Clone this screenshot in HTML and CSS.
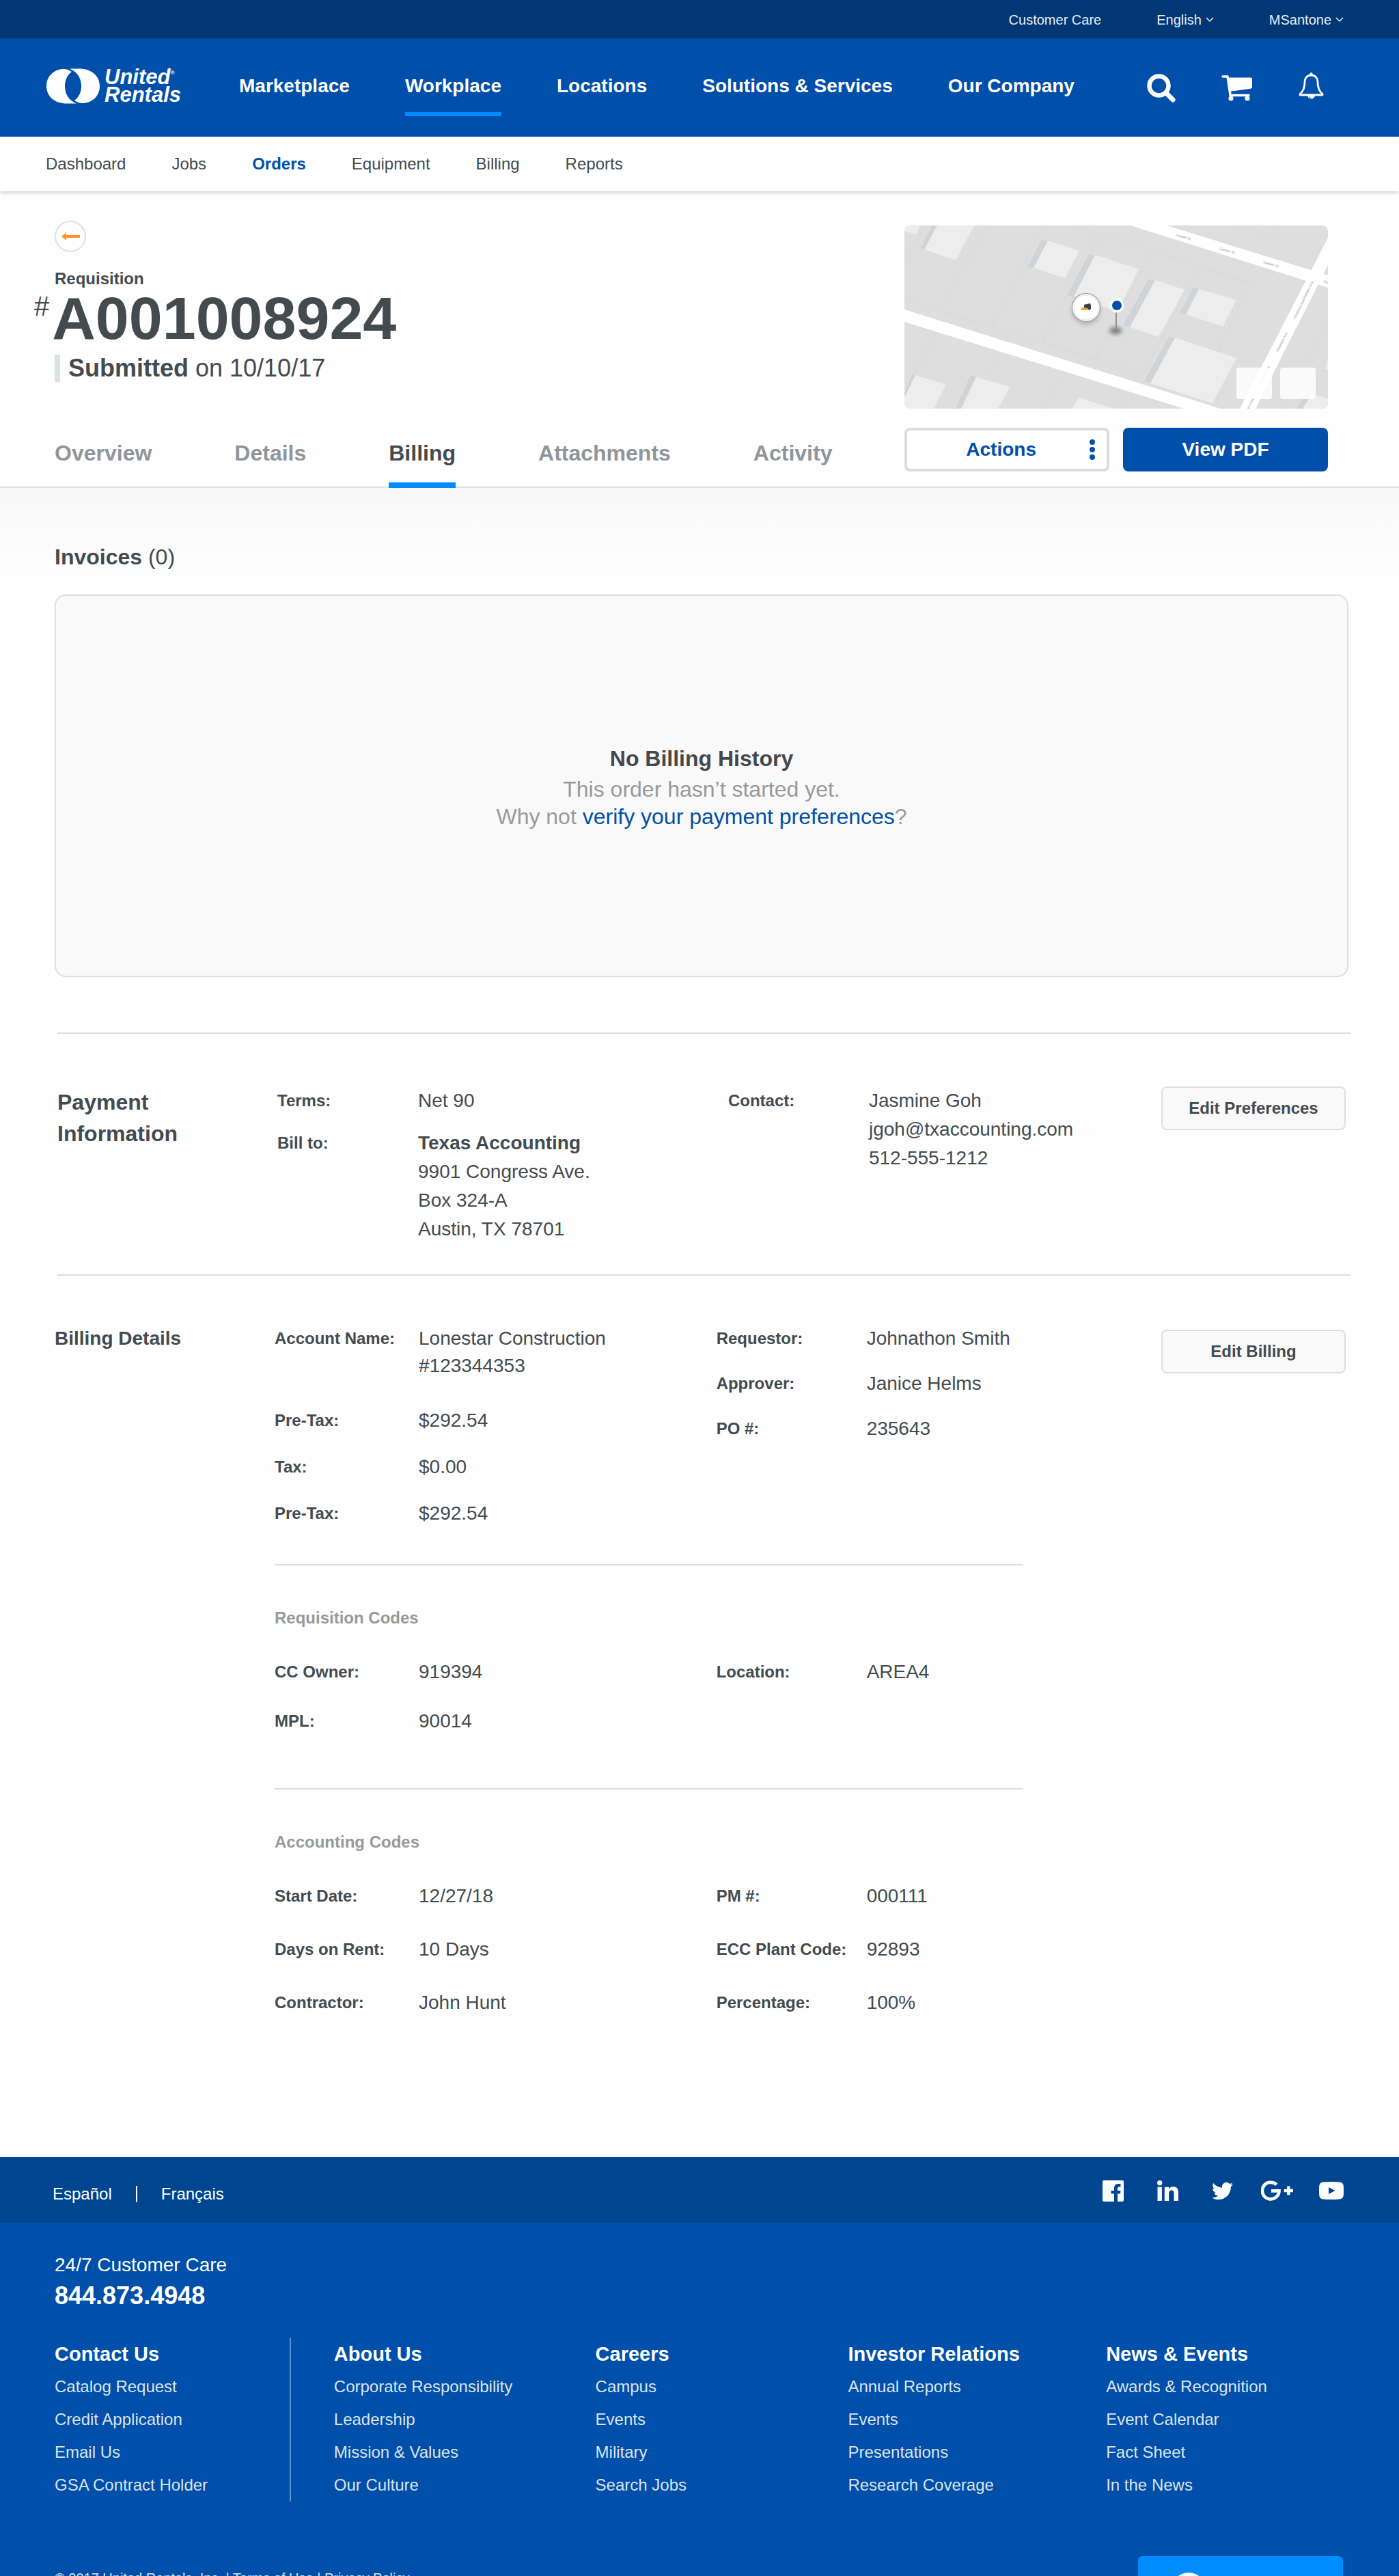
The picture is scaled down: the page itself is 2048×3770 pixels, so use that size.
FILE: index.html
```html
<!DOCTYPE html>
<html lang="en">
<head>
  <meta charset="UTF-8" />
  <meta name="viewport" content="width=device-width, initial-scale=1" />
  <title>Requisition A001008924 - Billing</title>
  <link rel="stylesheet" href="styles.css">
</head>
<body>

<!-- Utility bar -->
<div class="topbar">
  <a href="#">Customer Care</a>
  <button type="button">English
    <svg width="12" height="8" viewBox="0 0 12 8"><path d="M1 1l5 5 5-5" fill="none" stroke="currentColor" stroke-width="1.500" /></svg>
  </button>
  <button type="button">MSantone
    <svg width="12" height="8" viewBox="0 0 12 8"><path d="M1 1l5 5 5-5" fill="none" stroke="currentColor" stroke-width="1.500" /></svg>
  </button>
</div>

<!-- Header -->
<header class="header">
  <a href="#" class="logo">
    <svg width="78" height="52" viewBox="0 0 78 52" fill="#fff">
      <path d="M37 5C30 10 27 18 27 26c0 12 6 21 17 25.600H30C12 51.600 0 41 0 26 0 11 12 1 25 1c5 0 9 2 12 4z" />
      <path transform="rotate(180 39 26)" d="M37 5C30 10 27 18 27 26c0 12 6 21 17 25.600H30C12 51.600 0 41 0 26 0 11 12 1 25 1c5 0 9 2 12 4z" />
    </svg>
    <span class="logo-text">United<sup>®</sup><br>Rentals</span>
  </a>
  <nav class="main-nav">
    <a href="#">Marketplace</a>
    <a href="#" class="active">Workplace</a>
    <a href="#">Locations</a>
    <a href="#">Solutions &amp; Services</a>
    <a href="#">Our Company</a>
  </nav>
  <div class="header-icons">
    <button type="button" aria-label="Search">
      <svg width="42" height="42" viewBox="0 0 42 42" fill="none" stroke="#fff">
        <circle cx="17.500" cy="17.500" r="14" stroke-width="6.500" />
        <path d="M29 29l9 9" stroke-width="7" stroke-linecap="round" />
      </svg>
    </button>
    <a href="#" aria-label="Cart">
      <svg width="46" height="38" viewBox="0 0 46 38">
        <path d="M2 2h7l4 27" fill="none" stroke="#fff" stroke-width="3.500" stroke-linecap="round" stroke-linejoin="round" />
        <path d="M9 3.500h34a2 2 0 0 1 2 2v12q0 2-2 2.300L12 24z" fill="#fff" />
        <path d="M13 29.500h27" stroke="#fff" stroke-width="3.500" stroke-linecap="round" />
        <circle cx="14" cy="34" r="3.600" fill="#fff" />
        <circle cx="38" cy="34" r="3.600" fill="#fff" />
      </svg>
    </a>
    <button type="button" aria-label="Notifications">
      <svg width="38" height="46" viewBox="0 0 38 46">
        <path d="M18.500 4C12 4 9 9 9 14c0 10-3 14.500-7 17.500v1.500h33v-1.500C31 28.500 28 24 28 14c0-5-3-10-9.500-10z" fill="none" stroke="#fff" stroke-width="2.800" stroke-linejoin="round" />
        <circle cx="18.500" cy="2.500" r="2.200" fill="#fff" />
        <path d="M13 34a5.700 6.500 0 0 0 11 0z" fill="#fff" />
        <path d="M15.500 35.500q.5 2.500 3 3" fill="none" stroke="#004faa" />
      </svg>
    </button>
  </div>
</header>

<nav class="sub-nav">
  <a href="#">Dashboard</a>
  <a href="#">Jobs</a>
  <a href="#" class="active">Orders</a>
  <a href="#">Equipment</a>
  <a href="#">Billing</a>
  <a href="#">Reports</a>
</nav>

<!-- Order summary -->
<section class="order">
  <div class="order-main">
    <a href="#" class="back" aria-label="Back">
      <svg width="27" height="12" viewBox="0 0 27 12" fill="#ff9425"><path d="M0 6l7-6v4h20v4H7v4z" /></svg>
    </a>
    <p class="order-type">Requisition</p>
    <h1 class="order-number"><span>#</span>A001008924</h1>
    <p class="order-status"><strong>Submitted</strong> on 10/10/17</p>
    <nav class="tabs">
      <a href="#">Overview</a>
      <a href="#">Details</a>
      <a href="#" class="active">Billing</a>
      <a href="#">Attachments</a>
      <a href="#">Activity</a>
    </nav>
  </div>

  <div class="order-side">
    <svg class="map" viewBox="0 0 620 268">
      <defs>
        <filter id="soft" x="-50%" y="-50%" width="200%" height="200%"><feGaussianBlur stdDeviation="3" /></filter>
      </defs>
      <rect width="620" height="268" fill="#dedede" />
      <!-- parcels -->
      <path d="M29 0L0 58M119 0L53 125M204 0l-76 150M286 15l-85 158M361 39l-83 158M432 60l-82 157M246 0l261 85-49 98M0 109l350 108M47 157l-33 61M141 185l-20 40M232 213l-28 55M324 243l-13 25M620 137l-64 131M489 0l52 16 9-16" fill="none" stroke="#d7d8d8" />
      <!-- streets -->
      <path d="M0 123l462 145h-53L0 141zM331 0h53l236 73v18zM620 18v40L514 268h-23z" fill="#fff" />
      <!-- building shadows -->
      <path d="M40 0h10L31 36l-7-2zM201 21l10 2-20 40-11-3zM270 42l10 2-30 61-12-3zM357 79l11 2-36 69-12-4zM422 91l10 3-18 37-11-3zM387 163l10 2-35 67-11-4zM12 217l5 3-15 34-2-9zM97 219l9 4-22 45h-9zM588 245l9 3-13 20h-10z" fill="#d0d4d7" />
      <!-- buildings -->
      <path d="M0 0h23l-6 13L0 8zM48 0h54L75 51 29 35zM210 22l46 15-21 40-46-15zM279 43l64 21-31 62-64-22zM367 80l43 14-38 69-42-14zM431 93l55 16-20 39-54-18zM396 164l90 30-35 66-91-29zM16 219l45 14-18 35H0v-16zM105 222l49 14-17 32H83zM255 252l51 16h-60zM596 247l24 6v15h-37zM620 195l-4 15 4 1z" fill="#ededed" />
      <g class="map-street">
        <text transform="translate(397 15) rotate(17)">Garden St</text>
        <text transform="translate(461 35) rotate(17)">Garden St</text>
        <text transform="translate(525 55) rotate(17)">Garden St</text>
        <text transform="translate(613 83) rotate(17)">Garden St</text>
        <text transform="translate(572 137) rotate(-63)">Chalmers Ave</text>
        <text transform="translate(585 110) rotate(-63)">Chalmers Ave</text>
        <text transform="translate(547 185) rotate(-63)">Chalmers Ave</text>
        <text transform="translate(521 234) rotate(-63)">Chalmers Ave</text>
        <text transform="translate(498 281) rotate(-63)">Chalmers Ave</text>
      </g>
      <!-- equipment marker -->
      <circle cx="266" cy="124" r="21" fill="#888" opacity=".5" filter="url(#soft)" />
      <circle cx="266" cy="120" r="20.500" fill="#fff" stroke="#aaa" stroke-width="1.500" />
      <circle cx="266" cy="120" r="18" fill="#fff" stroke="#e4e4e4" />
      <path d="M259 121l6-3 7 1v4l-5 1h-8z" fill="#f5a623" />
      <path d="M263 120v-4l4-1 5-1 1 3v5l-3 2-2-3z" fill="#3a3f4a" />
      <!-- site pin -->
      <ellipse cx="309" cy="154" rx="9" ry="5" fill="#777" filter="url(#soft)" />
      <path d="M310 126v26" stroke="#8a9096" stroke-width="2" />
      <circle cx="311" cy="117" r="10.500" fill="#fff" />
      <circle cx="311" cy="117" r="7" fill="#004faa" />
      <!-- zoom controls -->
      <rect x="486" y="208" width="52" height="46" rx="4" fill="#fff" opacity=".85" />
      <rect x="550" y="208" width="52" height="46" rx="4" fill="#fff" opacity=".85" />
    </svg>
    <div class="order-buttons">
      <button type="button" class="btn btn-outline">Actions
        <svg width="8" height="30" viewBox="0 0 8 30" fill="#004faa"><circle cx="4" cy="4" r="4" /><circle cx="4" cy="15" r="4" /><circle cx="4" cy="26" r="4" /></svg>
      </button>
      <button type="button" class="btn btn-primary">View PDF</button>
    </div>
  </div>
</section>

<main>
  <!-- Invoices -->
  <section class="invoices">
    <h2><strong>Invoices</strong> (0)</h2>
    <div class="empty">
      <h3>No Billing History</h3>
      <p>This order hasn’t started yet.<br>Why not <a href="#">verify your payment preferences</a>?</p>
    </div>
  </section>

  <!-- Payment information -->
  <section class="payment">
    <h2>Payment<br>Information</h2>
    <div class="pairs">
      <dl>
        <dt>Terms:</dt>
        <dd>Net 90</dd>
        <dt>Bill to:</dt>
        <dd><strong>Texas Accounting</strong><br>9901 Congress Ave.<br>Box 324-A<br>Austin, TX 78701</dd>
      </dl>
      <dl>
        <dt>Contact:</dt>
        <dd>Jasmine Goh<br>jgoh@txaccounting.com<br>512-555-1212</dd>
      </dl>
    </div>
    <button type="button" class="btn-edit">Edit Preferences</button>
  </section>

  <!-- Billing details -->
  <section class="billing">
    <h2>Billing Details</h2>
    <div class="billing-body">
      <div class="pairs">
        <dl>
          <dt>Account Name:</dt>
          <dd class="account">Lonestar Construction<br>#123344353</dd>
          <dt>Pre-Tax:</dt>
          <dd>$292.54</dd>
          <dt>Tax:</dt>
          <dd>$0.00</dd>
          <dt>Pre-Tax:</dt>
          <dd>$292.54</dd>
        </dl>
        <dl>
          <dt>Requestor:</dt>
          <dd>Johnathon Smith</dd>
          <dt>Approver:</dt>
          <dd>Janice Helms</dd>
          <dt>PO #:</dt>
          <dd>235643</dd>
        </dl>
      </div>

      <div class="codes">
        <h3>Requisition Codes</h3>
        <div class="pairs">
          <dl>
            <dt>CC Owner:</dt>
            <dd>919394</dd>
            <dt>MPL:</dt>
            <dd>90014</dd>
          </dl>
          <dl>
            <dt>Location:</dt>
            <dd>AREA4</dd>
          </dl>
        </div>
      </div>

      <div class="codes accounting">
        <h3>Accounting Codes</h3>
        <div class="pairs">
          <dl>
            <dt>Start Date:</dt>
            <dd>12/27/18</dd>
            <dt>Days on Rent:</dt>
            <dd>10 Days</dd>
            <dt>Contractor:</dt>
            <dd>John Hunt</dd>
          </dl>
          <dl>
            <dt>PM #:</dt>
            <dd>000111</dd>
            <dt>ECC Plant Code:</dt>
            <dd>92893</dd>
            <dt>Percentage:</dt>
            <dd>100%</dd>
          </dl>
        </div>
      </div>
    </div>
    <button type="button" class="btn-edit">Edit Billing</button>
  </section>
</main>

<!-- Footer -->
<footer class="footer">
  <div class="footer-top">
    <div class="languages">
      <a href="#">Español</a>
      <span class="bar"></span>
      <a href="#">Français</a>
    </div>
    <div class="social">
      <a href="#" aria-label="Facebook">
        <svg width="31" height="31" viewBox="0 0 31 31"><path d="M2 0h27a2 2 0 0 1 2 2v27a2 2 0 0 1-2 2h-7V19.500h4l.5-4.500H22v-3c0-1.700.8-2.500 2.500-2.500h2V5.200C21 4.500 17 6 17 11.500V15h-4.500v4.500H17V31H2a2 2 0 0 1-2-2V2a2 2 0 0 1 2-2z" /></svg>
      </a>
      <a href="#" aria-label="LinkedIn">
        <svg width="31" height="30" viewBox="0 0 31 30"><circle cx="3.700" cy="3.700" r="3.700" /><path d="M.5 9.700h6.400V30H.5zM10.800 9.700H17v2.800c1-1.900 3.300-3.300 6.500-3.300 6.300 0 7.500 4.200 7.500 9.500V30h-6.400V20c0-2.400 0-5.400-3.400-5.400S17.200 17 17.200 20v10h-6.400z" /></svg>
      </a>
      <a href="#" aria-label="Twitter">
        <svg width="31" height="31" viewBox="0 0 24 24"><path d="M23.953 4.570a10 10 0 01-2.825.775 4.958 4.958 0 002.163-2.723c-.951.555-2.005.959-3.127 1.184a4.920 4.920 0 00-8.384 4.482C7.690 8.095 4.067 6.130 1.640 3.162a4.822 4.822 0 00-.666 2.475c0 1.710.87 3.213 2.188 4.096a4.904 4.904 0 01-2.228-.616v.06a4.923 4.923 0 003.946 4.827 4.996 4.996 0 01-2.212.085 4.936 4.936 0 004.604 3.417 9.867 9.867 0 01-6.102 2.105c-.39 0-.779-.023-1.170-.067a13.995 13.995 0 007.557 2.209c9.053 0 13.998-7.496 13.998-13.985 0-.21 0-.42-.015-.63A9.935 9.935 0 0024 4.590z" /></svg>
      </a>
      <a href="#" aria-label="Google Plus">
        <svg width="47" height="30" viewBox="0 0 47 30" fill="none" stroke="#fff">
          <path d="M22.800 6.300A12.300 12.300 0 1 0 26.500 15.300H15" stroke-width="4.700" />
          <path d="M33.700 15h13.300M40.300 8.400v13.200" stroke-width="4.300" />
        </svg>
      </a>
      <a href="#" aria-label="YouTube">
        <svg width="36" height="26" viewBox="0 0 36 26"><path d="M6 .5Q18-.5 30 .5q5.500.5 5.800 6 .4 6.500 0 13-.3 5.500-5.800 6-12 1-24 0-5.500-.5-5.800-6-.4-6.500 0-13Q.5 1 6 .5zM14 8v10l9.500-5z" fill-rule="evenodd" /></svg>
      </a>
    </div>
  </div>

  <div class="footer-body">
    <p class="care">24/7 Customer Care</p>
    <a href="tel:8448734948" class="phone">844.873.4948</a>

    <div class="footer-links">
      <ul class="contact">
        <li><h4>Contact Us</h4></li>
        <li><a href="#">Catalog Request</a></li>
        <li><a href="#">Credit Application</a></li>
        <li><a href="#">Email Us</a></li>
        <li><a href="#">GSA Contract Holder</a></li>
      </ul>
      <ul class="about">
        <li><h4>About Us</h4></li>
        <li><a href="#">Corporate Responsibility</a></li>
        <li><a href="#">Leadership</a></li>
        <li><a href="#">Mission &amp; Values</a></li>
        <li><a href="#">Our Culture</a></li>
      </ul>
      <ul>
        <li><h4>Careers</h4></li>
        <li><a href="#">Campus</a></li>
        <li><a href="#">Events</a></li>
        <li><a href="#">Military</a></li>
        <li><a href="#">Search Jobs</a></li>
      </ul>
      <ul>
        <li><h4>Investor Relations</h4></li>
        <li><a href="#">Annual Reports</a></li>
        <li><a href="#">Events</a></li>
        <li><a href="#">Presentations</a></li>
        <li><a href="#">Research Coverage</a></li>
      </ul>
      <ul>
        <li><h4>News &amp; Events</h4></li>
        <li><a href="#">Awards &amp; Recognition</a></li>
        <li><a href="#">Event Calendar</a></li>
        <li><a href="#">Fact Sheet</a></li>
        <li><a href="#">In the News</a></li>
      </ul>
    </div>

    <div class="footer-bottom">
      <p>© 2017 United Rentals, Inc. | <a href="#">Terms of Use</a> | <a href="#">Privacy Policy</a></p>
      <button type="button" class="help" aria-label="Help">
        <svg width="52" height="52" viewBox="0 0 52 52"><circle cx="26" cy="26" r="26" fill="#fff" /></svg>
      </button>
    </div>
  </div>
</footer>

</body>
</html>
```
FILE: styles.css
```css
* {
  box-sizing: border-box;
}
body {
  margin: 0;
  font-family: "Liberation Sans", Arial, sans-serif;
  font-size: 28px;
  color: #434b4f;
  background: #fefefe;
}
h1, h2, h3, h4, p, ul, dl, dd {
  margin: 0;
  padding: 0;
}
ul {
  list-style: none;
}
a {
  color: inherit;
  text-decoration: none;
}
button {
  font-family: inherit;
  border: none;
  background: none;
  padding: 0;
  cursor: pointer;
}
svg {
  display: block;
}

/* Header */
.topbar {
  display: flex;
  justify-content: flex-end;
  align-items: center;
  gap: 81px;
  height: 56px;
  padding: 2px 81px 0 0;
  background: #003876;
  color: #e8eef5;
  font-size: 20px;
}
.topbar button {
  display: flex;
  align-items: center;
  gap: 6px;
  color: inherit;
  font-size: 20px;
}
.header {
  display: flex;
  align-items: center;
  height: 144px;
  padding: 0 109px 4px 68px;
  background: #004faa;
  color: #fff;
}
.logo {
  display: flex;
  align-items: center;
  gap: 7px;
  width: 282px;
}
.logo-text {
  font-size: 31px;
  line-height: 26px;
  font-weight: bold;
  font-style: italic;
}
.logo-text sup {
  font-size: 8px;
  line-height: 8px;
  vertical-align: 14px;
}
.main-nav {
  display: flex;
  gap: 81px;
  font-weight: bold;
}
.main-nav a {
  line-height: 40px;
  padding: 18px 0;
  border: solid transparent;
  border-width: 6px 0;
}
.main-nav a.active {
  border-bottom-color: #008cff;
}
.header-icons {
  display: flex;
  align-items: center;
  gap: 67px;
  margin-left: auto;
  padding-top: 6px;
}
.sub-nav {
  display: flex;
  align-items: center;
  gap: 67px;
  height: 80px;
  padding-left: 67px;
  background: #fff;
  box-shadow: 0 2px 6px rgba(0, 0, 0, 0.2);
  font-size: 24px;
}
.sub-nav .active {
  color: #004faa;
  font-weight: bold;
}

/* Order summary */
.order {
  display: flex;
  justify-content: space-between;
  padding: 0 104px 0 80px;
  border-bottom: 2px solid #dbe0e4;
}
.back {
  display: flex;
  align-items: center;
  justify-content: center;
  width: 46px;
  height: 46px;
  margin: 43px 0 25px;
  border: 2px solid #dde1e4;
  border-radius: 50%;
}
.order-type {
  font-size: 24px;
  line-height: 28px;
  font-weight: bold;
}
.order-number {
  display: flex;
  gap: 4px;
  margin-left: -30px;
  font-size: 88px;
  line-height: 88px;
}
.order-number span {
  font-size: 40px;
  line-height: 52px;
  font-weight: normal;
}
.order-status {
  margin-top: 9px;
  padding-left: 12px;
  border-left: 8px solid #dbe0e4;
  font-size: 36px;
  line-height: 40px;
}
.tabs {
  display: flex;
  gap: 121px;
  margin: 84px 0 -2px;
  font-size: 32px;
  font-weight: bold;
  color: #8f9699;
}
.tabs a {
  line-height: 40px;
  padding-bottom: 23px;
  border-bottom: 8px solid transparent;
}
.tabs a.active {
  color: #434b4f;
  border-bottom-color: #008cff;
}
.order-side {
  width: 620px;
  padding: 50px 0 22px;
}
.map {
  width: 100%;
  height: auto;
  border-radius: 8px;
}
.map-street {
  font-size: 5px;
  fill: #999;
}
.order-buttons {
  display: grid;
  grid-template-columns: 1fr 1fr;
  gap: 20px;
  margin-top: 28px;
}
.btn {
  height: 64px;
  border-radius: 8px;
  font-size: 28px;
  font-weight: bold;
}
.btn-outline {
  display: flex;
  align-items: center;
  justify-content: flex-end;
  gap: 78px;
  padding-right: 17px;
  border: 4px solid #dcdcdc;
  background: #fff;
  color: #004faa;
}
.btn-primary {
  background: #004faa;
  color: #fff;
}

/* Invoices */
.invoices {
  padding: 81px 74px 81px 80px;
  background: linear-gradient(#f8f8f8, #fefefe 140px);
}
.invoices h2 {
  font-size: 32px;
  line-height: 40px;
  font-weight: normal;
}
.empty {
  display: flex;
  flex-direction: column;
  align-items: center;
  justify-content: center;
  height: 560px;
  margin-top: 35px;
  padding-top: 4px;
  border: 2px solid #dcdfe2;
  border-radius: 16px;
  background: #f9f9f9;
  color: #999;
  font-size: 32px;
  line-height: 40px;
  text-align: center;
}
.empty h3 {
  margin-bottom: 5px;
  color: #45484a;
  font-size: 32px;
}
.empty a {
  color: #004faa;
}

/* Payment and billing details */
.payment, .billing {
  display: grid;
  grid-template-columns: 322px 1fr 270px;
  align-items: start;
}
.payment {
  margin: 0 71px 0 84px;
  padding: 77px 7px 45px 0;
  border: solid #dcdedf;
  border-width: 2px 0;
}
.payment h2 {
  font-size: 32px;
  line-height: 46px;
}
.billing {
  padding: 72px 78px 206px 80px;
}
.billing h2 {
  font-size: 28px;
  line-height: 40px;
}
.billing-body {
  margin-right: 202px;
}
.pairs {
  display: grid;
  grid-template-columns: 59% 41%;
  align-items: start;
}
.payment .pairs {
  grid-template-columns: 51% 49%;
}
.pairs dl {
  display: grid;
  grid-template-columns: 211px 1fr;
  row-gap: 28px;
  line-height: 40px;
}
.pairs dl + dl {
  grid-template-columns: 220px 1fr;
  row-gap: 26px;
}
.payment .pairs dl {
  grid-template-columns: 206px 1fr;
  row-gap: 20px;
  line-height: 42px;
}
.pairs dt {
  font-size: 24px;
  font-weight: bold;
}
.pairs .account {
  padding-bottom: 12px;
}
.btn-edit {
  height: 64px;
  border: 2px solid #dcdfe2;
  border-radius: 8px;
  background: #f9f9f9;
  color: #434b4f;
  font-size: 24px;
  font-weight: bold;
}
.billing .btn-edit {
  margin-top: 7px;
}
.codes {
  margin-top: 54px;
  padding-top: 57px;
  border-top: 2px solid #dcdedf;
}
.codes h3 {
  margin-bottom: 39px;
  color: #999;
  font-size: 24px;
  line-height: 40px;
}
.codes .pairs dl {
  row-gap: 32px;
}
.accounting {
  margin-top: 78px;
}
.accounting .pairs dl {
  row-gap: 38px;
}

/* Footer */
.footer {
  background: #004faa;
  color: #fff;
}
.footer-top {
  display: flex;
  align-items: center;
  justify-content: space-between;
  height: 96px;
  padding: 0 75px 0 77px;
  background: #00458f;
  font-size: 24px;
}
.languages {
  display: flex;
  align-items: center;
  gap: 35px;
  padding-top: 12px;
}
.languages .bar {
  width: 2px;
  height: 24px;
  background: #fff;
}
.social {
  display: flex;
  align-items: center;
  gap: 32px;
  padding-top: 2px;
}
.social a {
  display: flex;
  justify-content: center;
  width: 48px;
}
.social svg {
  fill: #fff;
}
.social svg[fill="none"] {
  fill: none;
}
.footer-body {
  padding: 42px 82px 40px 80px;
}
.care {
  line-height: 40px;
}
.phone {
  display: block;
  font-size: 36px;
  line-height: 50px;
  font-weight: bold;
}
.footer-links {
  display: grid;
  grid-template-columns: 346fr 446fr 370fr 378fr 347fr;
  margin-top: 36px;
  color: #dde3ea;
  font-size: 24px;
  line-height: 48px;
}
.footer-links h4 {
  color: #fff;
  font-size: 29px;
}
.footer-links .contact {
  border-right: 2px solid #5b93cf;
}
.footer-links .about {
  padding-left: 63px;
}
.footer-bottom {
  display: flex;
  justify-content: space-between;
  margin-top: 80px;
  font-size: 20px;
  line-height: 28px;
}
.footer-bottom p {
  margin-top: 18px;
  color: #dde3ea;
}
.help {
  width: 300px;
  padding: 24px 48px;
  border-radius: 6px;
  background: #008cff;
}
```
